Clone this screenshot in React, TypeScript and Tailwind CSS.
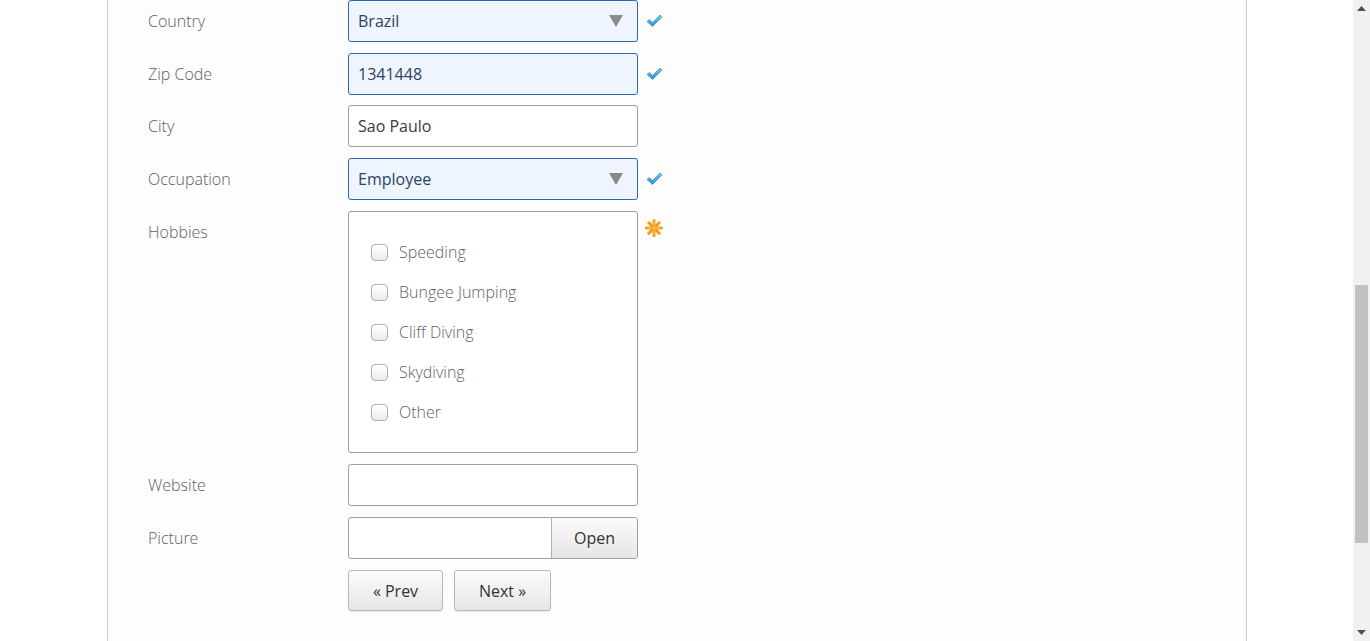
import React from 'react'

const hobbies = ['Speeding', 'Bungee Jumping', 'Cliff Diving', 'Skydiving', 'Other']

const CheckIcon = () => (
  <svg width="17" height="14" viewBox="0 0 17 14" className="ml-[8px]">
    <defs>
      <linearGradient id="chk" x1="0" y1="0" x2="0" y2="1">
        <stop offset="0" stopColor="#7cc8ee" />
        <stop offset="1" stopColor="#2a8fcf" />
      </linearGradient>
    </defs>
    <path d="M1 7.5 L3.5 5.5 L6.5 8.5 L14 1 L16 3 L6.5 12.5 Z" fill="url(#chk)" stroke="#2a86c4" strokeWidth="0.6" />
  </svg>
)

const StarIcon = () => (
  <svg width="18" height="18" viewBox="0 0 18 18" className="ml-[7px] -mt-[8px]">
    <g stroke="#f39a12" strokeWidth="3" strokeLinecap="round">
      <line x1="9" y1="1.5" x2="9" y2="16.5" />
      <line x1="1.5" y1="9" x2="16.5" y2="9" />
      <line x1="3.8" y1="3.8" x2="14.2" y2="14.2" />
      <line x1="14.2" y1="3.8" x2="3.8" y2="14.2" />
    </g>
    <g stroke="#ffc65a" strokeWidth="1" strokeLinecap="round">
      <line x1="9" y1="2.5" x2="9" y2="15.5" />
      <line x1="2.5" y1="9" x2="15.5" y2="9" />
    </g>
  </svg>
)

const Arrow = () => (
  <svg width="14" height="12" viewBox="0 0 14 12">
    <path d="M0 0 H14 L7 12 Z" fill="#8a8a8a" />
  </svg>
)

const Row = ({ label, children, icon, className = '' }: { label: string; children: React.ReactNode; icon?: React.ReactNode; className?: string }) => (
  <div className={`flex items-start ${className}`}>
    <div className="w-[200px] h-[42px] flex items-center text-[16px] font-light text-[#5f5f5f]">{label}</div>
    <div className="w-[290px]">{children}</div>
    {icon && <div className="h-[42px] flex items-center">{icon}</div>}
  </div>
)

const validBox = 'h-[42px] w-full rounded-[3px] border border-[#2d68ad] bg-[#eef5fe] flex items-center px-[9px] text-[16px] text-[#2c425e]'
const plainBox = 'h-[42px] w-full rounded-[3px] border border-[#a0a0a0] bg-white flex items-center px-[9px] text-[16px] text-[#3a3a3a]'
const btn = 'h-[41px] rounded-[3px] border border-[#b8b8b8] bg-gradient-to-b from-[#fbfbfb] to-[#e6e6e6] text-[16px] text-[#333] flex items-center justify-center shadow-[0_1px_1px_rgba(0,0,0,0.08)]'

export default function App() {
  return (
    <div className="flex h-[641px] overflow-hidden bg-white" style={{ fontFamily: '"Open Sans", "Liberation Sans", sans-serif' }}>
      <div className="flex-1">
        <div className="ml-[107px] w-[1140px] h-full border-l border-r border-[#cbcbcb] bg-[#fdfdfd] pl-[40px]">
          <Row label="Country" icon={<CheckIcon />}>
            <div className={`${validBox} justify-between pr-[14px]`}>
              <span>Brazil</span>
              <Arrow />
            </div>
          </Row>
          <Row label="Zip Code" icon={<CheckIcon />} className="mt-[11px]">
            <div className={validBox}>1341448</div>
          </Row>
          <Row label="City" className="mt-[10px]">
            <div className={plainBox}>Sao Paulo</div>
          </Row>
          <Row label="Occupation" icon={<CheckIcon />} className="mt-[11px]">
            <div className={`${validBox} justify-between pr-[14px]`}>
              <span>Employee</span>
              <Arrow />
            </div>
          </Row>
          <Row label="Hobbies" icon={<StarIcon />} className="mt-[11px]">
            <div className="h-[242px] rounded-[3px] border border-[#a0a0a0] bg-white pt-[20px] pl-[22px]">
              {hobbies.map((h) => (
                <div key={h} className="h-[40px] flex items-center">
                  <span className="w-[17px] h-[17px] rounded-[4px] border border-[#b0b0b0] bg-gradient-to-b from-white to-[#ececec] shadow-[inset_0_1px_1px_rgba(255,255,255,0.8)]" />
                  <span className="ml-[11px] text-[16px] font-light text-[#5f5f5f]">{h}</span>
                </div>
              ))}
            </div>
          </Row>
          <Row label="Website" className="mt-[11px]">
            <div className={plainBox} />
          </Row>
          <Row label="Picture" className="mt-[11px]">
            <div className="h-[42px] flex rounded-[3px] border border-[#a0a0a0] bg-white overflow-hidden">
              <div className="flex-1" />
              <div className="w-[86px] border-l border-[#b0b0b0] bg-gradient-to-b from-[#fbfbfb] to-[#e6e6e6] text-[16px] text-[#333] flex items-center justify-center">Open</div>
            </div>
          </Row>
          <div className="flex mt-[11px] ml-[200px] gap-[11px]">
            <button className={`${btn} w-[95px]`}>« Prev</button>
            <button className={`${btn} w-[97px]`}>Next »</button>
          </div>
        </div>
      </div>
      <div className="w-[17px] h-full bg-[#f1f1f1] flex flex-col items-center">
        <div className="h-[17px] flex items-center justify-center">
          <svg width="9" height="5" viewBox="0 0 9 5"><path d="M0 5 L4.5 0 L9 5 Z" fill="#505050" /></svg>
        </div>
        <div className="h-[268px]" />
        <div className="w-[13px] h-[258px] bg-[#c1c1c1]" />
        <div className="flex-1" />
        <div className="h-[17px] flex items-center justify-center">
          <svg width="9" height="5" viewBox="0 0 9 5"><path d="M0 0 L9 0 L4.5 5 Z" fill="#505050" /></svg>
        </div>
      </div>
    </div>
  )
}
